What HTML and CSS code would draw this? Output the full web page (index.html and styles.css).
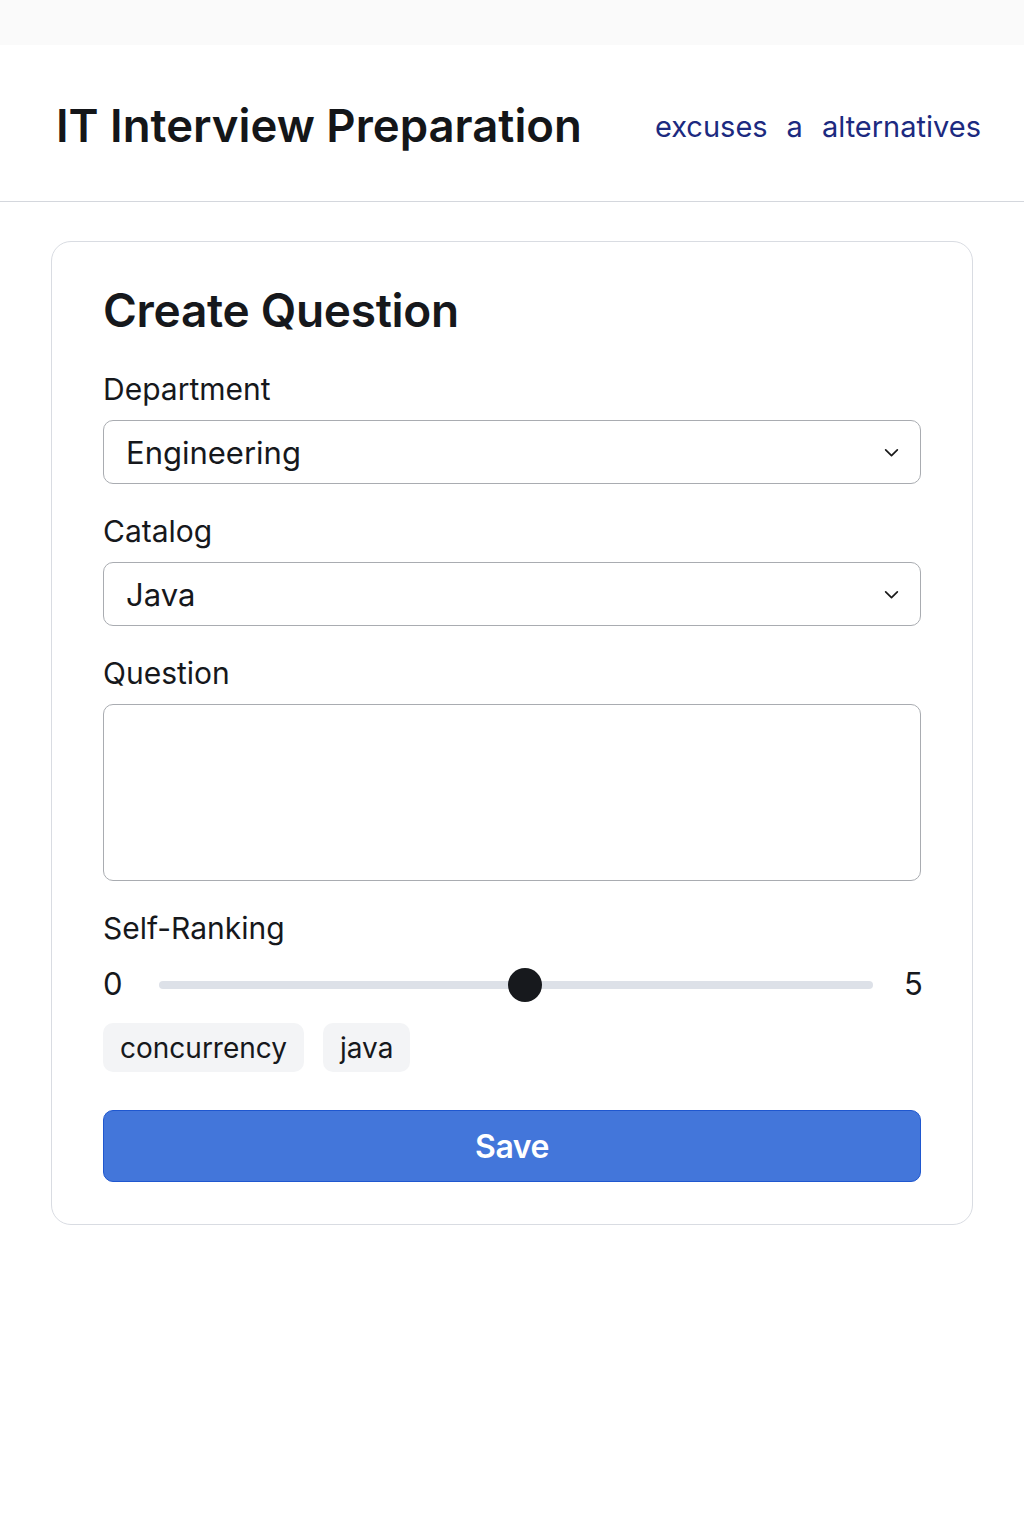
FILE: index.html
```html
<!DOCTYPE html>
<html lang="en">
<head>
<meta charset="utf-8">
<title>IT Interview Preparation</title>
<link rel="stylesheet" href="styles.css">
</head>
<body>
<div class="topbar"></div>
<header class="header">
  <h1 class="brand">IT Interview Preparation</h1>
  <nav class="nav">
    <a class="nav-link" href="#">excuses</a>
    <a class="nav-link" href="#">a</a>
    <a class="nav-link" href="#">alternatives</a>
  </nav>
</header>
<main class="main">
  <section class="card">
    <h2 class="card-title">Create Question</h2>
    <div class="field">
      <label class="label">Department</label>
      <div class="select">
        <span class="select-value">Engineering</span>
        <svg class="chevron" viewBox="0 0 16 16" width="16" height="16"><path d="M2.5 5.5 L8 11 L13.5 5.5" fill="none" stroke="#1a1a1a" stroke-width="1.6" stroke-linecap="round" stroke-linejoin="round"/></svg>
      </div>
    </div>
    <div class="field">
      <label class="label">Catalog</label>
      <div class="select">
        <span class="select-value">Java</span>
        <svg class="chevron" viewBox="0 0 16 16" width="16" height="16"><path d="M2.5 5.5 L8 11 L13.5 5.5" fill="none" stroke="#1a1a1a" stroke-width="1.6" stroke-linecap="round" stroke-linejoin="round"/></svg>
      </div>
    </div>
    <div class="field">
      <label class="label">Question</label>
      <div class="textarea"></div>
    </div>
    <div class="field field-range">
      <label class="label">Self-Ranking</label>
      <div class="range-row">
        <span class="range-num range-min">0</span>
        <div class="track">
          <div class="thumb" style="left: 51.2%"></div>
        </div>
        <span class="range-num range-max">5</span>
      </div>
    </div>
    <div class="tags">
      <span class="tag">concurrency</span>
      <span class="tag">java</span>
    </div>
    <button class="save">Save</button>
  </section>
</main>
</body>
</html>
```
FILE: styles.css
```css
* { box-sizing: border-box; }
html, body { margin: 0; padding: 0; background: #ffffff; }
body {
  font-family: Inter, "Noto Sans", "Liberation Sans", sans-serif;
  color: #16181c;
}
.topbar { height: 45px; background: #fafafa; }
.header {
  height: 157px;
  display: flex;
  align-items: center;
  justify-content: space-between;
  padding: 4px 43px 0 56px;
  border-bottom: 1px solid #d4d7dd;
  background: #fff;
}
.brand {
  margin: 0;
  font-size: 45.5px;
  font-weight: 600;
  letter-spacing: 0;
  color: #141619;
}
.nav { display: flex; gap: 19px; padding-top: 2px; }
.nav-link {
  color: #1c2a80;
  text-decoration: none;
  font-size: 29px;
  font-weight: 400;
  letter-spacing: 0;
}
.main { padding: 39px 51px 0 51px; }
.card {
  border: 1px solid #d9dce2;
  border-radius: 20px;
  padding: 40px 51px 42px 51px;
  display: flex;
  flex-direction: column;
}
.card-title {
  margin: 0 0 33px 0;
  font-size: 46px;
  font-weight: 600;
  letter-spacing: -0.3px;
  color: #16181c;
  line-height: 56px;
}
.field { display: flex; flex-direction: column; margin-bottom: 29px; }
.label {
  font-size: 30px;
  line-height: 36px;
  margin-bottom: 13px;
  color: #16181c;
}
.select {
  height: 64px;
  border: 1px solid #a9acb1;
  border-radius: 10px;
  display: flex;
  align-items: center;
  justify-content: space-between;
  padding: 0 20px 0 22px;
}
.select-value { font-size: 31px; color: #16181c; }
.chevron { width: 17px; height: 17px; }
.textarea {
  height: 177px;
  border: 1px solid #a9acb1;
  border-radius: 10px;
}
.field-range { margin-bottom: 22px; }
.range-row {
  display: flex;
  align-items: center;
  height: 40px;
  margin-top: 4px;
}
.range-num { font-size: 31px; }
.range-min { width: 19px; margin-right: 37px; }
.range-max { width: 17px; margin-left: 31px; text-align: right; }
.track {
  flex: 1;
  height: 8px;
  background: #dde1e8;
  border-radius: 4px;
  position: relative;
  margin-top: 4px;
}
.thumb {
  position: absolute;
  top: 50%;
  width: 34px;
  height: 34px;
  border-radius: 50%;
  background: #17191d;
  transform: translate(-50%, -50%);
}
.tags { display: flex; gap: 19px; margin-top: -2px; margin-bottom: 38px; }
.tag {
  background: #f3f4f6;
  border-radius: 10px;
  height: 49px;
  display: flex;
  align-items: center;
  padding: 0 17px;
  font-size: 28px;
  color: #16181c;
}
.save {
  height: 72px;
  border: 1px solid #1f57cf;
  border-radius: 10px;
  background: #4376da;
  color: #fff;
  font-family: Inter, "Noto Sans", sans-serif;
  font-size: 32px;
  font-weight: 600;
  letter-spacing: -0.5px;
}
```
